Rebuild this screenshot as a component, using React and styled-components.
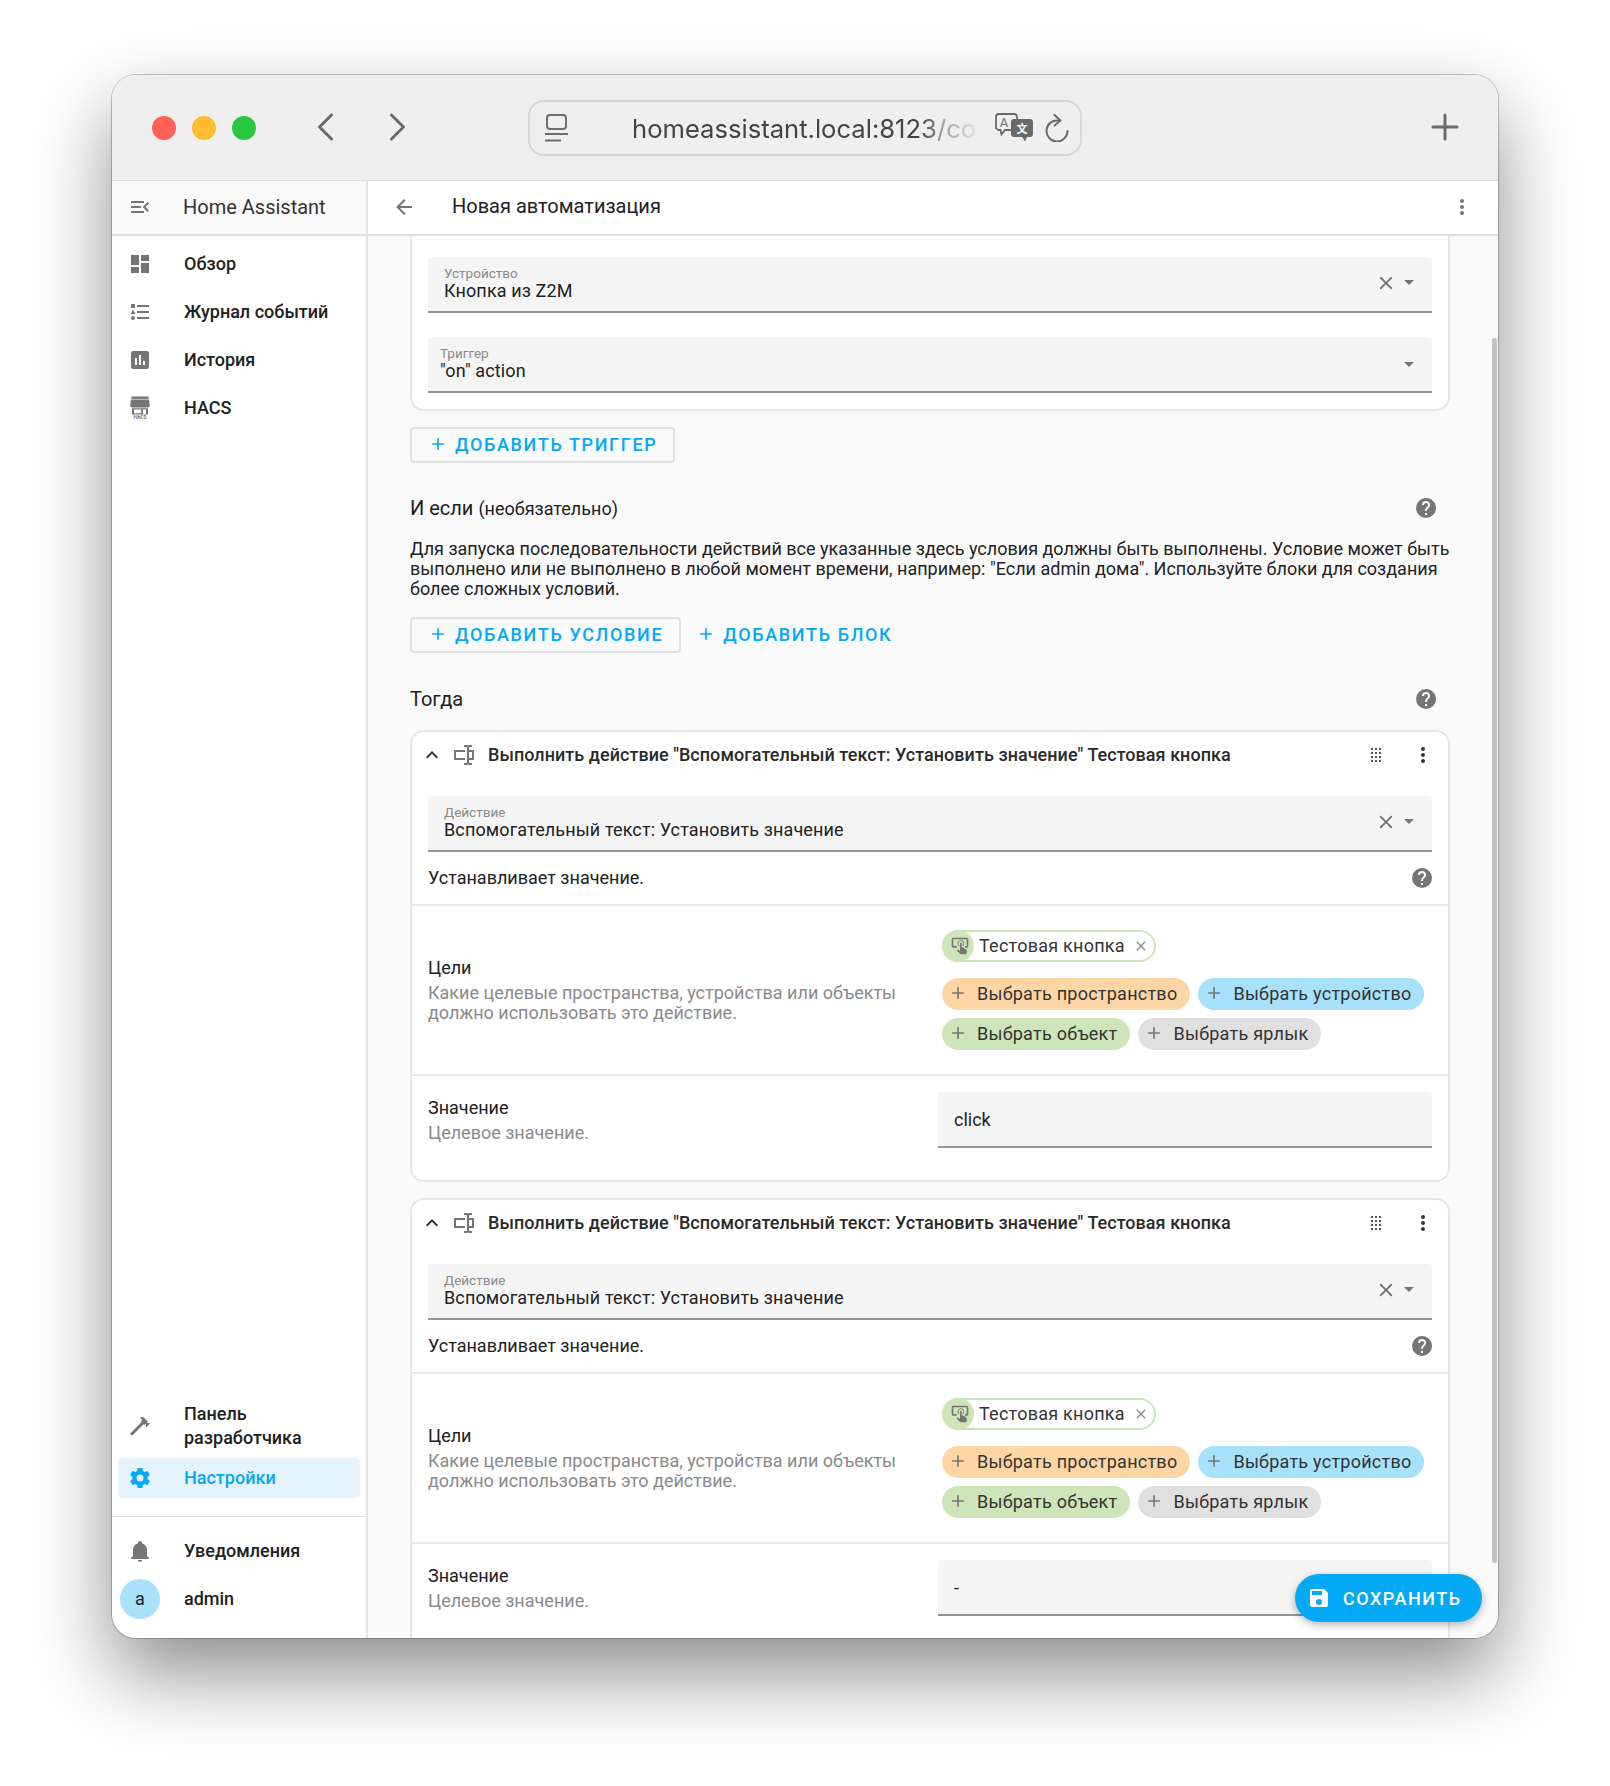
import React from 'react';
import styled, { createGlobalStyle } from 'styled-components';

const P = {
  dashboard: 'M13,3V9H21V3M13,21H21V11H13M3,21H11V15H3M3,13H11V3H3V13Z',
  logbook: 'M5,9.5L7.5,14H2.5L5,9.5M3,4H7V8H3V4M5,20A2,2 0 0,0 7,18A2,2 0 0,0 5,16A2,2 0 0,0 3,18A2,2 0 0,0 5,20M9,5V7H21V5H9M9,19H21V17H9V19M9,13H21V11H9V13Z',
  history: 'M9 17H7V10H9V17M13 17H11V7H13V17M17 17H15V13H17V17M19 3H5C3.89 3 3 3.89 3 5V19C3 20.1 3.89 21 5 21H19C20.1 21 21 20.1 21 19V5C21 3.89 20.1 3 19 3Z',
  menuOpen: 'M21,15.61L19.59,17L14.58,12L19.59,7L21,8.39L17.44,12L21,15.61M3,6H16V8H3V6M3,13V11H13V13H3M3,18V16H16V18H3Z',
  back: 'M20,11V13H8L13.5,18.5L12.08,19.92L4.16,12L12.08,4.08L13.5,5.5L8,11H20Z',
  dots: 'M12,16A2,2 0 0,1 14,18A2,2 0 0,1 12,20A2,2 0 0,1 10,18A2,2 0 0,1 12,16M12,10A2,2 0 0,1 14,12A2,2 0 0,1 12,14A2,2 0 0,1 10,12A2,2 0 0,1 12,10M12,4A2,2 0 0,1 14,6A2,2 0 0,1 12,8A2,2 0 0,1 10,6A2,2 0 0,1 12,4Z',
  close: 'M19,6.41L17.59,5L12,10.59L6.41,5L5,6.41L10.59,12L5,17.59L6.41,19L12,13.41L17.59,19L19,17.59L13.41,12L19,6.41Z',
  menuDown: 'M7,10L12,15L17,10H7Z',
  help: 'M15.07,11.25L14.17,12.17C13.45,12.89 13,13.5 13,15H11V14.5C11,13.39 11.45,12.39 12.17,11.67L13.41,10.41C13.78,10.05 14,9.55 14,9C14,7.89 13.1,7 12,7A2,2 0 0,0 10,9H8A4,4 0 0,1 12,5A4,4 0 0,1 16,9C16,9.88 15.64,10.67 15.07,11.25M13,19H11V17H13M12,2A10,10 0 0,0 2,12A10,10 0 0,0 12,22A10,10 0 0,0 22,12C22,6.47 17.5,2 12,2Z',
  plus: 'M19,13H13V19H11V13H5V11H11V5H13V11H19V13Z',
  chevronUp: 'M7.41,15.41L12,10.83L16.59,15.41L18,14L12,8L6,14L7.41,15.41Z',
  textbox: 'M17,7H22V17H17V19A1,1 0 0,0 18,20H20V22H17.5C16.95,22 16,21.55 16,21C16,21.55 15.05,22 14.5,22H12V20H14A1,1 0 0,0 15,19V5A1,1 0 0,0 14,4H12V2H14.5C15.05,2 16,2.45 16,3C16,2.45 16.95,2 17.5,2H20V4H18A1,1 0 0,0 17,5V7M2,7H13V9H4V15H13V17H2V7M20,15V9H17V15H20Z',
  drag: 'M7,19V17H9V19H7M11,19V17H13V19H11M15,19V17H17V19H15M7,15V13H9V15H7M11,15V13H13V15H11M15,15V13H17V15H15M7,11V9H9V11H7M11,11V9H13V11H11M15,11V9H17V11H15M7,7V5H9V7H7M11,7V5H13V7H11M15,7V5H17V7H15Z',
  cog: 'M12,15.5A3.5,3.5 0 0,1 8.5,12A3.5,3.5 0 0,1 12,8.5A3.5,3.5 0 0,1 15.5,12A3.5,3.5 0 0,1 12,15.5M19.43,12.97C19.47,12.65 19.5,12.33 19.5,12C19.5,11.67 19.47,11.34 19.43,11L21.54,9.37C21.73,9.22 21.78,8.95 21.66,8.73L19.66,5.27C19.54,5.05 19.27,4.96 19.05,5.05L16.56,6.05C16.04,5.66 15.5,5.32 14.87,5.07L14.5,2.42C14.46,2.18 14.25,2 14,2H10C9.75,2 9.54,2.18 9.5,2.42L9.13,5.07C8.5,5.32 7.96,5.66 7.44,6.05L4.95,5.05C4.73,4.96 4.46,5.05 4.34,5.27L2.34,8.73C2.21,8.95 2.27,9.22 2.46,9.37L4.57,11C4.53,11.34 4.5,11.67 4.5,12C4.5,12.33 4.53,12.65 4.57,12.97L2.46,14.63C2.27,14.78 2.21,15.05 2.34,15.27L4.34,18.73C4.46,18.95 4.73,19.03 4.95,18.95L7.44,17.94C7.96,18.34 8.5,18.68 9.13,18.93L9.5,21.58C9.54,21.82 9.75,22 10,22H14C14.25,22 14.46,21.82 14.5,21.58L14.87,18.93C15.5,18.67 16.04,18.34 16.56,17.94L19.05,18.95C19.27,19.03 19.54,18.95 19.66,18.73L21.66,15.27C21.78,15.05 21.73,14.78 21.54,14.63L19.43,12.97Z',
  bell: 'M21,19V20H3V19L5,17V11C5,7.9 7.03,5.17 10,4.29C10,4.19 10,4.1 10,4A2,2 0 0,1 12,2A2,2 0 0,1 14,4C14,4.1 14,4.19 14,4.29C16.97,5.17 19,7.9 19,11V17L21,19M14,21A2,2 0 0,1 12,23A2,2 0 0,1 10,21',
  hammer: 'M2 19.63L13.43 8.2L12.72 7.5L14.14 6.07L12 3.89C13.2 2.7 15.09 2.7 16.27 3.89L19.87 7.5L18.45 8.91H21.29L22 9.62L18.45 13.21L17.74 12.5V9.62L16.27 11.04L15.56 10.33L4.13 21.76L2 19.63Z',
  save: 'M15,9H5V5H15M12,19A3,3 0 0,1 9,16A3,3 0 0,1 12,13A3,3 0 0,1 15,16A3,3 0 0,1 12,19M17,3H5C3.89,3 3,3.9 3,5V19A2,2 0 0,0 5,21H19A2,2 0 0,0 21,19V7L17,3Z',
  tap: 'M13 5C15.21 5 17 6.79 17 9C17 10.5 16.2 11.77 15 12.46V11.24C15.61 10.69 16 9.89 16 9C16 7.34 14.66 6 13 6S10 7.34 10 9C10 9.89 10.39 10.69 11 11.24V12.46C9.8 11.77 9 10.5 9 9C9 6.79 10.79 5 13 5M20 20.5C19.97 21.32 19.32 21.97 18.5 22H13C12.62 22 12.26 21.85 12 21.57L8 17.37L8.74 16.6C8.93 16.39 9.2 16.28 9.5 16.28H9.7L12 18V9C12 8.45 12.45 8 13 8S14 8.45 14 9V13.47L15.21 13.6L19.15 15.79C19.68 16.03 20 16.56 20 17.14V20.5M20 2H4C2.9 2 2 2.9 2 4V12C2 13.11 2.9 14 4 14H8V12L4 12L4 4H20L20 12H18V14H20V13.96L20.04 14C21.13 14 22 13.09 22 12V4C22 2.9 21.11 2 20 2Z',
};

const GlobalStyle = createGlobalStyle`
  html, body { margin: 0; padding: 0; background: #fff; }
  body { font-family: Roboto, "Noto Sans", sans-serif; color: #212121; }
`;

const Page = styled.div`
  width: 1610px;
  height: 1786px;
  padding: 75px 112px 148px;
  box-sizing: border-box;
  overflow: hidden;
`;

const Window = styled.div`
  position: relative;
  height: 100%;
  border-radius: 24px;
  overflow: hidden;
  background: #fff;
  display: flex;
  flex-direction: column;
  box-shadow: 0 0 0 1px rgba(0, 0, 0, 0.22);
`;

const Shadow = styled.div`
  height: 100%;
  border-radius: 24px;
  box-shadow: 0 36px 80px rgba(0, 0, 0, 0.45);
`;

const Toolbar = styled.div`
  height: 106px;
  flex: none;
  box-sizing: border-box;
  padding: 0 39px 0 40px;
  display: flex;
  align-items: center;
  background: #efefef;
  border-bottom: 1px solid #dcdcdc;
`;

const Lights = styled.div`
  display: flex;
  gap: 16px;
`;

const Light = styled.span`
  width: 24px;
  height: 24px;
  border-radius: 50%;
  background: ${(p) => p.$color};
`;

const NavArrow = styled.svg`
  width: 17px;
  height: 28px;
  margin: 0 0 2px ${(p) => p.$left}px;
  fill: none;
  stroke: #6a6a6a;
  stroke-width: 3;
  stroke-linecap: round;
  stroke-linejoin: round;
`;

const UrlBar = styled.div`
  margin-left: 122px;
  width: 554px;
  height: 56px;
  box-sizing: border-box;
  border: 2px solid #d6d6d6;
  border-radius: 16px;
  display: flex;
  align-items: center;
  padding-left: 14px;
`;

const SiteIcon = styled.svg`
  width: 25px;
  height: 28px;
  flex: none;
  fill: none;
  stroke: #6e6e6e;
  stroke-width: 2;
`;

const UrlText = styled.div`
  width: 343px;
  margin: 2px 0 0 63px;
  flex: none;
  overflow: hidden;
  white-space: nowrap;
  font-family: Inter, Roboto, sans-serif;
  font-size: 25.6px;
  line-height: 34px;
  color: #444;
  -webkit-mask-image: linear-gradient(to right, #000 84%, rgba(0, 0, 0, 0.5) 90%, rgba(0, 0, 0, 0.1) 100%);
  mask-image: linear-gradient(to right, #000 84%, rgba(0, 0, 0, 0.5) 90%, rgba(0, 0, 0, 0.1) 100%);
`;

const TranslateIcon = styled.svg`
  width: 39px;
  height: 29px;
  margin-left: 20px;
  flex: none;
`;

const ReloadIcon = styled.svg`
  width: 24px;
  height: 28px;
  margin-left: 11px;
  flex: none;
  fill: none;
  stroke: #6a6a6a;
  stroke-width: 2;
  stroke-linecap: round;
  stroke-linejoin: round;
`;

const NewTab = styled.svg`
  width: 28px;
  height: 28px;
  margin: 0 0 2px auto;
  stroke: #6a6a6a;
  stroke-width: 3;
  stroke-linecap: round;
`;

const Body = styled.div`
  flex: 1;
  min-height: 0;
  display: flex;
`;

const Sidebar = styled.aside`
  width: 256px;
  flex: none;
  box-sizing: border-box;
  border-right: 2px solid #e4e4e4;
  display: flex;
  flex-direction: column;
`;

const SideHead = styled.div`
  height: 55px;
  flex: none;
  box-sizing: border-box;
  border-bottom: 2px solid #e0e0e0;
  background: #fafafa;
  display: flex;
  align-items: center;
  padding: 0 0 2px 16px;
  font-size: 20px;
  color: #333;
`;

const HeadTitle = styled.span`
  margin-left: 31px;
`;

const Nav = styled.nav`
  padding-top: 4px;
  flex: 1;
`;

const NavItem = styled.div`
  min-height: ${(p) => (p.$active ? 40 : 48)}px;
  margin: ${(p) => (p.$active ? '8px 6px 0' : '0 6px')};
  padding-left: 10px;
  box-sizing: border-box;
  display: flex;
  align-items: center;
  gap: 32px;
  border-radius: 4px;
  font-size: 18px;
  line-height: 24px;
  font-weight: 500;
  color: ${(p) => (p.$active ? '#03a9f4' : '#212121')};
  background: ${(p) => (p.$active ? '#e5f4fc' : 'transparent')};
`;

const SideBottom = styled.div`
  flex: none;
`;

const SideGroup = styled.div`
  padding-bottom: 18px;
  border-bottom: 1px solid #e0e0e0;
`;

const Account = styled.div`
  padding: 10px 0 15px;
`;

const Avatar = styled.div`
  width: 40px;
  height: 40px;
  margin-left: -8px;
  margin-right: -8px;
  flex: none;
  border-radius: 50%;
  background: #a9e1fd;
  display: flex;
  align-items: center;
  justify-content: center;
  font-size: 18px;
  font-weight: 400;
`;

const Icon = styled.svg`
  width: ${(p) => p.$size || 24}px;
  height: ${(p) => p.$size || 24}px;
  flex: none;
  fill: ${(p) => p.$color || '#757575'};
`;

const Main = styled.main`
  flex: 1;
  min-width: 0;
  display: flex;
  flex-direction: column;
  background: #fafafa;
`;

const MainHead = styled.header`
  height: 55px;
  flex: none;
  box-sizing: border-box;
  border-bottom: 2px solid #e0e0e0;
  background: #fff;
  display: flex;
  align-items: center;
  padding: 0 24px 2px 24px;
  font-size: 20px;
  color: #212121;
`;

const MainTitle = styled.span`
  margin: 0 0 2px 36px;
  flex: 1;
`;

const Scroll = styled.div`
  flex: 1;
  min-height: 0;
  overflow: hidden;
  padding: 0 48px 0 42px;
`;

const Card = styled.section`
  background: #fff;
  border: 2px solid #e6e6e6;
  border-radius: 14px;
  margin-bottom: 16px;
  ${(p) => p.$open && `
    border-top: 0;
    border-top-left-radius: 0;
    border-top-right-radius: 0;
    padding: 21px 16px 16px;
    display: flex;
    flex-direction: column;
    gap: 24px;
  `}
`;

const CardHead = styled.div`
  height: 49px;
  box-sizing: border-box;
  display: flex;
  align-items: center;
  padding: 0 13px 4px 8px;
  font-size: 18px;
  font-weight: 500;
  color: #2a2a2a;
`;

const CardTitle = styled.span`
  margin-left: 12px;
  flex: 1;
  white-space: nowrap;
  letter-spacing: 0.04px;
`;

const Spaced = styled.div`
  margin-left: ${(p) => p.$left || 0}px;
  display: flex;
`;

const FieldWrap = styled.div`
  margin: 15px 16px 0;
`;

const Field = styled.div`
  height: 56px;
  box-sizing: border-box;
  background: #f5f5f5;
  border-bottom: 2px solid #949494;
  border-radius: 4px 4px 0 0;
  display: flex;
  align-items: center;
  padding: 0 11px 0 ${(p) => p.$pad || 16}px;
`;

const FieldText = styled.div`
  flex: 1;
  padding-bottom: 1px;
`;

const FieldLabel = styled.div`
  font-size: 13.5px;
  line-height: 12px;
  margin-bottom: 2px;
  color: #8a8a8a;
`;

const FieldValue = styled.div`
  font-size: 18px;
  line-height: 20px;
  letter-spacing: 0.12px;
  color: #212121;
`;

const FieldIcons = styled.div`
  display: flex;
  align-items: center;
  padding-bottom: ${(p) => (p.$clearable ? 5 : 0)}px;
`;

const CloseIcon = styled(Icon)`
  margin-top: 2px;
`;

const Actions = styled.div`
  display: flex;
  align-items: center;
  gap: 15px;
  margin-top: 18px;
`;

const OutlineButton = styled.div`
  height: 36px;
  box-sizing: border-box;
  display: inline-flex;
  align-items: center;
  gap: 7px;
  padding: 0 ${(p) => (p.$plain ? 0 : 16)}px 2px ${(p) => (p.$plain ? 0 : 16)}px;
  border: ${(p) => (p.$plain ? '0' : '2px solid #e0e0e0')};
  border-radius: 4px;
  font-size: 18px;
  font-weight: 500;
  letter-spacing: 1.65px;
  color: #03a9f4;
  white-space: nowrap;
`;

const SectionHead = styled.div`
  display: flex;
  align-items: center;
  justify-content: space-between;
  height: 24px;
  padding-right: 12px;
  margin-top: ${(p) => p.$top}px;
  font-size: 20px;
  color: #212121;
`;

const Optional = styled.span`
  font-size: 18px;
`;

const Para = styled.p`
  margin: 19px 0 0;
  font-size: 18px;
  line-height: 20px;
  color: #212121;
`;

const CardStack = styled.div`
  margin-top: 19px;
`;

const HintRow = styled.div`
  height: 52px;
  box-sizing: border-box;
  padding: 0 14px 1px 16px;
  display: flex;
  align-items: center;
  justify-content: space-between;
  font-size: 18px;
  color: #212121;
`;

const ActionRow = styled.div`
  display: grid;
  grid-template-columns: 510px 494px;
  align-items: center;
  padding: ${(p) => (p.$last ? '16px 16px 32px' : '0 16px')};
  border-top: 2px solid #e8e8e8;
  height: ${(p) => (p.$last ? 'auto' : '170px')};
  box-sizing: border-box;
`;

const RowText = styled.div`
  padding-bottom: 2px;
`;

const RowTitle = styled.div`
  font-size: 18px;
  line-height: 24px;
  margin-bottom: 3px;
  color: #212121;
`;

const RowDesc = styled.div`
  font-size: 18px;
  line-height: 20px;
  color: #8a8a8a;
  max-width: 480px;
`;

const Chips = styled.div`
  padding-left: 4px;
`;

const ChipWrap = styled.div`
  display: flex;
  flex-wrap: wrap;
  gap: 8px;
`;

const DeviceChip = styled.div`
  width: 214px;
  height: 32px;
  box-sizing: border-box;
  margin-bottom: 16px;
  border: 2px solid #cde5b8;
  border-radius: 16px;
  display: flex;
  align-items: center;
  font-size: 18px;
  letter-spacing: 0.25px;
  color: #333;
`;

const ChipIcon = styled.span`
  width: 32px;
  height: 32px;
  box-sizing: border-box;
  padding-left: 4px;
  margin-left: -2px;
  flex: none;
  border-radius: 50%;
  background: #cde5b8;
  display: flex;
  align-items: center;
  justify-content: center;
`;

const ChipLabel = styled.span`
  margin: 0 0 2px 5px;
  flex: 1;
  white-space: nowrap;
`;

const ChipClose = styled(Icon)`
  margin-right: 5px;
`;

const Pill = styled.div`
  height: 32px;
  box-sizing: border-box;
  padding: 0 13px 2px 6px;
  border-radius: 16px;
  background: ${(p) => p.$color};
  display: flex;
  align-items: center;
  gap: 9px;
  font-size: 18px;
  letter-spacing: 0.25px;
  color: #333;
  white-space: nowrap;
`;

const ValueInput = styled.div`
  height: 56px;
  box-sizing: border-box;
  background: #f5f5f5;
  border-bottom: 2px solid #949494;
  border-radius: 4px 4px 0 0;
  display: flex;
  align-items: center;
  padding-left: 16px;
  font-size: 18px;
  color: #212121;
`;

const ScrollThumb = styled.div`
  position: absolute;
  right: 1px;
  top: 263px;
  width: 5px;
  height: 1225px;
  border-radius: 3px;
  background: #c2c2c2;
`;

const Fab = styled.div`
  position: absolute;
  left: 1183px;
  top: 1499px;
  width: 187px;
  height: 48px;
  box-sizing: border-box;
  padding-left: 12px;
  border-radius: 24px;
  background: #03a9f4;
  display: flex;
  align-items: center;
  gap: 12px;
  color: #fff;
  font-size: 18px;
  font-weight: 500;
  letter-spacing: 1.5px;
  box-shadow: 0 3px 8px rgba(0, 0, 0, 0.28);
`;

function Mdi({ d, size, color, as: Comp = Icon }) {
  return (
    <Comp viewBox="0 0 24 24" $size={size} $color={color}>
      <path d={d} />
    </Comp>
  );
}

function HacsIcon() {
  return (
    <Icon viewBox="0 0 24 24">
      <rect x="3.5" y="0.5" width="17" height="2.4" />
      <path d="M3 3.6H21L21.8 9.6C21.8 10.8 20.8 11.4 19.8 11.4H4.2C3.2 11.4 2.2 10.8 2.2 9.6Z" />
      <path d="M4 12.2H20V18.6H4ZM6 13.4V17.2H13.2V13.4ZM15 13.4V18H18V13.4Z" fillRule="evenodd" />
      <text x="12" y="23.4" textAnchor="middle" fontSize="5" fontWeight="700" fontFamily="Roboto, sans-serif">HACS</text>
    </Icon>
  );
}

function Select({ label, value, pad, clearable }) {
  return (
    <Field $pad={pad}>
      <FieldText>
        <FieldLabel>{label}</FieldLabel>
        <FieldValue>{value}</FieldValue>
      </FieldText>
      <FieldIcons $clearable={clearable}>
        {clearable && <Mdi d={P.close} size={22} as={CloseIcon} />}
        <Mdi d={P.menuDown} />
      </FieldIcons>
    </Field>
  );
}

function ActionCard({ value }) {
  return (
    <Card>
      <CardHead>
        <Mdi d={P.chevronUp} color="#333" />
        <Spaced $left={8}><Mdi d={P.textbox} /></Spaced>
        <CardTitle>Выполнить действие "Вспомогательный текст: Установить значение" Тестовая кнопка</CardTitle>
        <Mdi d={P.drag} color="#555" />
        <Spaced $left={23}><Mdi d={P.dots} color="#333" /></Spaced>
      </CardHead>
      <FieldWrap>
        <Select label="Действие" value="Вспомогательный текст: Установить значение" clearable />
      </FieldWrap>
      <HintRow>
        Устанавливает значение.
        <Mdi d={P.help} />
      </HintRow>
      <ActionRow>
        <RowText>
          <RowTitle>Цели</RowTitle>
          <RowDesc>Какие целевые пространства, устройства или объекты должно использовать это действие.</RowDesc>
        </RowText>
        <Chips>
          <DeviceChip>
            <ChipIcon><Mdi d={P.tap} size={20} /></ChipIcon>
            <ChipLabel>Тестовая кнопка</ChipLabel>
            <Mdi d={P.close} size={16} color="#888" as={ChipClose} />
          </DeviceChip>
          <ChipWrap>
            <Pill $color="#fed6a5"><Mdi d={P.plus} size={20} />Выбрать пространство</Pill>
            <Pill $color="#a8e1fb"><Mdi d={P.plus} size={20} />Выбрать устройство</Pill>
            <Pill $color="#cde5b8"><Mdi d={P.plus} size={20} />Выбрать объект</Pill>
            <Pill $color="#e0e0e0"><Mdi d={P.plus} size={20} />Выбрать ярлык</Pill>
          </ChipWrap>
        </Chips>
      </ActionRow>
      <ActionRow $last>
        <RowText>
          <RowTitle>Значение</RowTitle>
          <RowDesc>Целевое значение.</RowDesc>
        </RowText>
        <ValueInput>{value}</ValueInput>
      </ActionRow>
    </Card>
  );
}

export default function App() {
  return (
    <>
      <GlobalStyle />
      <Page>
        <Shadow>
          <Window>
            <Toolbar>
              <Lights>
                <Light $color="#ff5f57" />
                <Light $color="#febc2e" />
                <Light $color="#28c840" />
              </Lights>
              <NavArrow viewBox="0 0 17 28" $left={61}><path d="M14.5 2L2.5 14L14.5 26" /></NavArrow>
              <NavArrow viewBox="0 0 17 28" $left={55}><path d="M2.5 2L14.5 14L2.5 26" /></NavArrow>
              <UrlBar>
                <SiteIcon viewBox="0 0 25 28">
                  <rect x="3" y="1" width="19" height="14" rx="3" />
                  <path d="M1 20H24M1 26.5H17" />
                </SiteIcon>
                <UrlText>homeassistant.local:8123/co</UrlText>
                <TranslateIcon viewBox="0 0 39 29">
                  <path d="M4 1H19A3 3 0 0 1 22 4V14A3 3 0 0 1 19 17H10L6.5 21.5L5.5 17H4A3 3 0 0 1 1 14V4A3 3 0 0 1 4 1Z" fill="none" stroke="#6a6a6a" strokeWidth="1.8" />
                  <text x="9" y="14" textAnchor="middle" fontSize="13" fontFamily="Roboto, sans-serif" fill="#6a6a6a">A</text>
                  <path d="M19 6H35A3 3 0 0 1 38 9V21A3 3 0 0 1 35 24H32L30 28.5L27 24H19A3 3 0 0 1 16 21V9A3 3 0 0 1 19 6Z" fill="#6a6a6a" />
                  <text x="27" y="20" textAnchor="middle" fontSize="11" fontWeight="700" fontFamily="'Noto Sans CJK SC', sans-serif" fill="#fff">文</text>
                </TranslateIcon>
                <ReloadIcon viewBox="0 0 24 28">
                  <path d="M14 6.6A10.5 10.5 0 1 0 22.5 17" />
                  <path d="M9.5 1L15.5 6.6L9.5 11.5" />
                </ReloadIcon>
              </UrlBar>
              <NewTab viewBox="0 0 28 28"><path d="M14 2V26M2 14H26" /></NewTab>
            </Toolbar>
            <Body>
              <Sidebar>
                <SideHead>
                  <Mdi d={P.menuOpen} />
                  <HeadTitle>Home Assistant</HeadTitle>
                </SideHead>
                <Nav>
                  <NavItem><Mdi d={P.dashboard} />Обзор</NavItem>
                  <NavItem><Mdi d={P.logbook} />Журнал событий</NavItem>
                  <NavItem><Mdi d={P.history} />История</NavItem>
                  <NavItem><HacsIcon />HACS</NavItem>
                </Nav>
                <SideBottom>
                  <SideGroup>
                    <NavItem><Mdi d={P.hammer} /><span>Панель<br />разработчика</span></NavItem>
                    <NavItem $active><Mdi d={P.cog} color="#03a9f4" />Настройки</NavItem>
                  </SideGroup>
                  <Account>
                    <NavItem><Mdi d={P.bell} />Уведомления</NavItem>
                    <NavItem><Avatar>a</Avatar>admin</NavItem>
                  </Account>
                </SideBottom>
              </Sidebar>
              <Main>
                <MainHead>
                  <Mdi d={P.back} />
                  <MainTitle>Новая автоматизация</MainTitle>
                  <Mdi d={P.dots} />
                </MainHead>
                <Scroll>
                  <Card $open>
                    <Select label="Устройство" value="Кнопка из Z2M" clearable />
                    <Select label="Триггер" value={'"on" action'} pad={12} />
                  </Card>
                  <OutlineButton><Mdi d={P.plus} size={20} color="#03a9f4" />ДОБАВИТЬ ТРИГГЕР</OutlineButton>
                  <SectionHead $top={33}>
                    <span>И если <Optional>(необязательно)</Optional></span>
                    <Mdi d={P.help} />
                  </SectionHead>
                  <Para>
                    Для запуска последовательности действий все указанные здесь условия должны быть выполнены. Условие может быть выполнено или не выполнено в любой момент времени, например: "Если admin дома". Используйте блоки для создания более сложных условий.
                  </Para>
                  <Actions>
                    <OutlineButton><Mdi d={P.plus} size={20} color="#03a9f4" />ДОБАВИТЬ УСЛОВИЕ</OutlineButton>
                    <OutlineButton $plain><Mdi d={P.plus} size={20} color="#03a9f4" />ДОБАВИТЬ БЛОК</OutlineButton>
                  </Actions>
                  <SectionHead $top={34}>
                    <span>Тогда</span>
                    <Mdi d={P.help} />
                  </SectionHead>
                  <CardStack>
                    <ActionCard value="click" />
                    <ActionCard value="-" />
                  </CardStack>
                </Scroll>
              </Main>
            </Body>
            <ScrollThumb />
            <Fab><Mdi d={P.save} color="#fff" />СОХРАНИТЬ</Fab>
          </Window>
        </Shadow>
      </Page>
    </>
  );
}
